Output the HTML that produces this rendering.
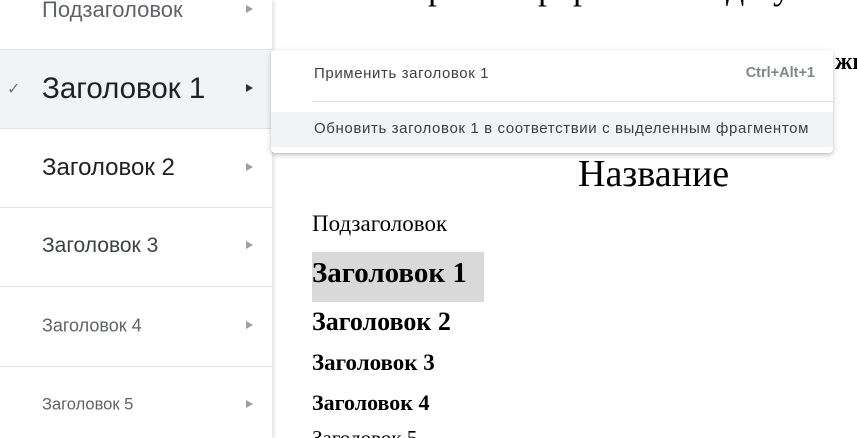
<!DOCTYPE html>
<html><head><meta charset="utf-8"><style>
*{margin:0;padding:0;box-sizing:border-box}
html,body{width:857px;height:438px;overflow:hidden}
body{background:#fff;position:relative;font-family:"Liberation Sans",sans-serif}
.a{position:absolute;white-space:nowrap}
.serif{font-family:"Liberation Serif",serif;color:#000}
#left{position:absolute;left:0;top:0;width:272px;height:438px;background:#fff;box-shadow:2px 0 4px rgba(0,0,0,.12)}
.row{position:absolute;left:0;width:272px;border-top:1px solid #e3e3e3}
.tx{position:absolute;left:42px;transform:translateY(-50%);white-space:nowrap}
.ar{position:absolute;left:246px;width:0;height:0;border-left:7px solid #9aa0a6;border-top:4px solid transparent;border-bottom:4px solid transparent;transform:translateY(-50%)}
#pop{position:absolute;left:271px;top:50px;width:562px;height:103px;background:#fff;border-radius:4px;box-shadow:0 2px 6px rgba(0,0,0,.2),0 1px 2px rgba(0,0,0,.1)}
</style></head><body>
<div class="a serif" style="left:428px;top:-31px;font-size:36px;line-height:36px">р</div>
<div class="a serif" style="left:538px;top:-31px;font-size:36px;line-height:36px">р</div>
<div class="a serif" style="left:573px;top:-31px;font-size:36px;line-height:36px">р</div>
<div class="a serif" style="left:726px;top:-31px;font-size:36px;line-height:36px">д</div>
<div class="a serif" style="left:773px;top:-31px;font-size:36px;line-height:36px">у</div>
<div class="a serif" style="left:835px;top:50px;font-size:24px;font-weight:bold;line-height:24px">жи</div>

<div class="a serif" style="left:578px;top:153px;font-size:38px;line-height:42px">Название</div>
<div class="a serif" style="left:312px;top:211px;font-size:23px;line-height:26px">Подзаголовок</div>
<div class="a" style="left:312px;top:252px;width:172px;height:50px;background:#d9d9d9"></div>
<div class="a serif" style="left:312px;top:256px;font-size:29px;font-weight:bold;line-height:34px">Заголовок 1</div>
<div class="a serif" style="left:312px;top:307px;font-size:26px;font-weight:bold;line-height:30px">Заголовок 2</div>
<div class="a serif" style="left:312px;top:349px;font-size:23px;font-weight:bold;line-height:28px">Заголовок 3</div>
<div class="a serif" style="left:312px;top:390px;font-size:22px;font-weight:bold;line-height:26px">Заголовок 4</div>
<div class="a serif" style="left:312px;top:426px;font-size:21px;line-height:24px">Заголовок 5</div>

<div id="left">
<div class="tx" style="top:10px;font-size:22px;color:#5f6368">Подзаголовок</div><div class="ar" style="top:9px"></div>
<div class="row" style="top:49px;height:80px;background:#f1f3f4"></div>
<div class="a" style="left:7px;top:79px;font-size:16px;color:#777">✓</div>
<div class="tx" style="top:89px;font-size:29.5px;color:#202124">Заголовок 1</div><div class="ar" style="top:88px;border-left-color:#333"></div>
<div class="row" style="top:128px;height:1px;border-color:#e3e3e3"></div>
<div class="tx" style="top:168px;font-size:24px;color:#202124">Заголовок 2</div><div class="ar" style="top:167px"></div>
<div class="row" style="top:207px"></div>
<div class="tx" style="top:246px;font-size:21px;color:#3c4043">Заголовок 3</div><div class="ar" style="top:245px"></div>
<div class="row" style="top:286px"></div>
<div class="tx" style="top:326px;font-size:18px;color:#5f6368">Заголовок 4</div><div class="ar" style="top:325px"></div>
<div class="row" style="top:366px"></div>
<div class="tx" style="top:405px;font-size:16.5px;color:#5f6368">Заголовок 5</div><div class="ar" style="top:404px"></div>
</div>

<div id="pop">
<div class="a" style="left:43px;top:15px;font-size:15px;color:#3c4043;letter-spacing:.6px">Применить заголовок 1</div>
<div class="a" style="right:18px;top:15px;font-size:14.5px;color:#80868b;font-weight:bold">Ctrl+Alt+1</div>
<div class="a" style="left:41px;right:0;top:51px;height:1px;background:#dadce0"></div>
<div class="a" style="left:0;right:0;top:62px;height:35px;background:#f1f3f4"></div>
<div class="a" style="left:43px;top:70px;font-size:15px;color:#3c4043;letter-spacing:.62px">Обновить заголовок 1 в соответствии с выделенным фрагментом</div>
</div>
</body></html>
